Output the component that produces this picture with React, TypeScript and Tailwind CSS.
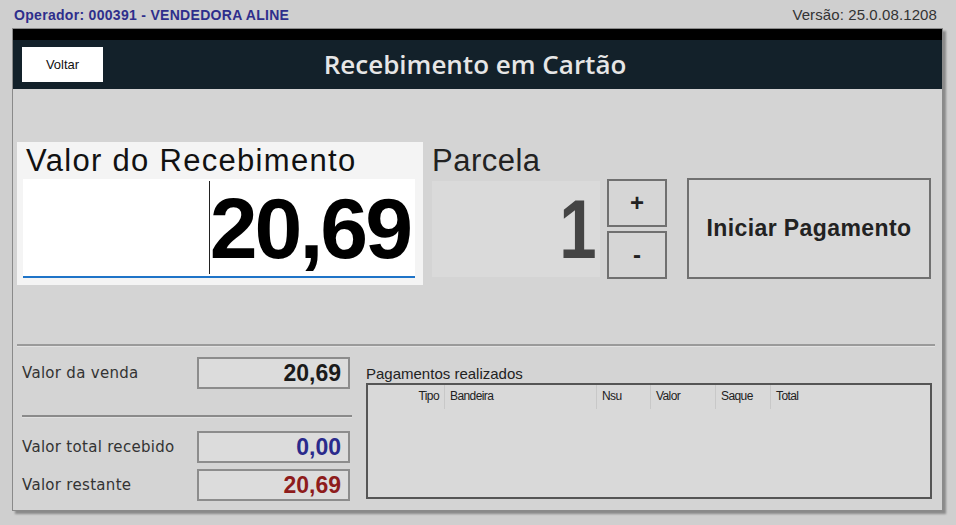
const SANS = "font-['Liberation_Sans',Arial,sans-serif]";

type ResumoProps = { label: string; value: string; color: string };

function ResumoLinha({ label, value, color }: ResumoProps) {
  return (
    <div className="flex items-center h-[32px]">
      <span className="w-[175px] font-['DejaVu_Sans',sans-serif] text-[15px] tracking-[0.3px] text-[#333] whitespace-nowrap">{label}</span>
      <div className="w-[153px] h-[32px] border-2 border-[#8c8c8c] bg-[#dcdcdc] flex items-center justify-end pr-[7px]">
        <span className={`text-[23px] font-bold leading-none ${color}`}>{value}</span>
      </div>
    </div>
  );
}

const COLUNAS = [
  { label: "Tipo", w: "w-[77px]", right: true },
  { label: "Bandeira", w: "w-[152px]" },
  { label: "Nsu", w: "w-[54px]" },
  { label: "Valor", w: "w-[65px]" },
  { label: "Saque", w: "w-[55px]" },
  { label: "Total", w: "flex-1" },
];

export default function App() {
  return (
    <div className={`w-[956px] h-[525px] bg-[#cfcfcf] overflow-hidden ${SANS}`}>
      <div className="h-[28px] flex items-end justify-between pl-[14px] pr-[19px] pb-[2px]">
        <span className="text-[14px] font-bold text-[#2e2e8c] tracking-[0.3px]">Operador: 000391 - VENDEDORA ALINE</span>
        <span className="text-[15px] text-[#333] tracking-[0.1px]">Versão: 25.0.08.1208</span>
      </div>

      <div className="ml-[12px] w-[931px] h-[483px] border border-[#8a8a8a] bg-[#d4d4d4] shadow-[3px_3px_2px_#8a8a8a] flex flex-col">
        <div className="h-[11px] bg-black" />
        <div className="h-[49px] bg-[#13212a] flex items-center px-[9px]">
          <button className="w-[81px] h-[35px] bg-white text-[13px] text-[#111]">Voltar</button>
          <h1 className="flex-1 text-center font-['Open_Sans',sans-serif] font-semibold text-[26px] text-[#e6e6e6] pr-[86px]">
            Recebimento em Cartão
          </h1>
        </div>

        <div className="flex items-start pl-[4px] pt-[53px]">
          <div className="w-[406px] h-[143px] bg-[#f4f4f4] flex flex-col">
            <span className="text-[31px] leading-[36px] tracking-[1.3px] text-[#111] pl-[9px] pt-[1px] whitespace-nowrap">Valor do Recebimento</span>
            <div className="ml-[6px] w-[392px] h-[99px] bg-white border-b-2 border-[#1f74c8] flex items-center justify-end pr-[5px]">
              <div className="w-px h-[93px] bg-[#222]" />
              <span className="text-[86px] font-bold leading-none tracking-[-3px] text-black">20,69</span>
            </div>
          </div>

          <div className="ml-[9px] flex flex-col">
            <span className="text-[31px] leading-[36px] tracking-[0.5px] text-[#222] pt-[1px]">Parcela</span>
            <div className="flex items-start">
              <div className="w-[168px] h-[96px] mt-[2px] bg-[#dadada] flex items-center justify-end pr-[3px]">
                <span className="text-[84px] font-bold leading-none text-[#444] scale-x-[0.8] origin-right">1</span>
              </div>
              <div className="ml-[7px] flex flex-col gap-[4px]">
                <button className="w-[60px] h-[48px] border-2 border-[#707070] bg-[#d6d6d6] text-[24px] font-bold leading-none text-[#222]">+</button>
                <button className="w-[60px] h-[48px] border-2 border-[#707070] bg-[#d6d6d6] text-[24px] font-bold leading-none text-[#222]">-</button>
              </div>
              <button className="ml-[20px] -mt-[1px] w-[244px] h-[101px] border-2 border-[#707070] bg-[#d8d8d8] text-[23px] font-bold text-[#222] tracking-[0.4px]">
                Iniciar Pagamento
              </button>
            </div>
          </div>
        </div>

        <div className="mt-[59px] ml-[4px] w-[918px] h-[3px] border-t-2 border-[#9a9a9a] border-b border-b-[#e2e2e2]" />

        <div className="flex pl-[9px] pt-[10px]">
          <div className="w-[330px] flex flex-col">
            <ResumoLinha label="Valor da venda" value="20,69" color="text-[#1a1a1a]" />
            <div className="mt-[26px] mb-[13px] h-[3px] border-t-2 border-[#8a8a8a] border-b border-b-[#e0e0e0]" />
            <ResumoLinha label="Valor total recebido" value="0,00" color="text-[#2a2a8c]" />
            <div className="h-[6px]" />
            <ResumoLinha label="Valor restante" value="20,69" color="text-[#8e1c1c]" />
          </div>

          <div className="ml-[14px] flex flex-col">
            <span className="text-[15px] text-[#222] leading-[18px] pt-[8px]">Pagamentos realizados</span>
            <div className="w-[566px] h-[116px] border-2 border-[#555] bg-[#d9d9d9]">
              <div className="flex h-[24px] text-[12px] text-[#222] tracking-[-0.6px]">
                {COLUNAS.map((c) => (
                  <div
                    key={c.label}
                    className={`${c.w} border-r border-[#c8c8c8] pt-[2px] px-[5px] last:border-r-0 ${c.right ? "text-right" : ""}`}
                  >
                    {c.label}
                  </div>
                ))}
              </div>
            </div>
          </div>
        </div>
      </div>
    </div>
  );
}
